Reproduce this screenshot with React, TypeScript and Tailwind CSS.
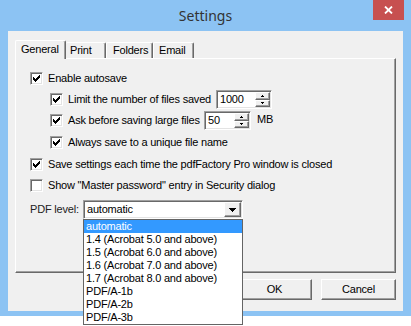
import React from "react"

function Check() {
  return (
    <svg width="7" height="7" viewBox="0 0 7 7" shapeRendering="crispEdges" className="block">
      <path
        d="M6 0h1v1H6z M5 1h2v1H5z M0 2h1v1H0z M4 2h3v1H4z M0 3h2v1H0z M3 3h3v1H3z M0 4h5v1H0z M1 5h3v1H1z M2 6h1v1H2z"
        fill="#000"
      />
    </svg>
  )
}

function CheckBox({ checked }: { checked: boolean }) {
  return (
    <div className="w-[13px] h-[13px] shrink-0 bg-white border border-t-[#a0a0a0] border-l-[#a0a0a0] border-r-white border-b-white shadow-[inset_1px_1px_0_#696969,inset_-1px_-1px_0_#e3e3e3] flex items-center justify-center">
      {checked && <Check />}
    </div>
  )
}

function SpinButton({ up }: { up: boolean }) {
  return (
    <div className="flex-1 bg-[#f0f0f0] border border-t-white border-l-white border-r-[#696969] border-b-[#696969] shadow-[inset_-1px_-1px_0_#a0a0a0] flex items-center justify-center">
      <svg width="3" height="2" viewBox="0 0 3 2" shapeRendering="crispEdges" className="block">
        <path d={up ? "M1 0h1v1H1z M0 1h3v1H0z" : "M0 0h3v1H0z M1 1h1v1H1z"} fill="#000" />
      </svg>
    </div>
  )
}

function Spin({ value, className }: { value: string; className: string }) {
  return (
    <div
      className={`h-[19px] flex bg-white border border-t-[#a0a0a0] border-l-[#a0a0a0] border-r-white border-b-white shadow-[inset_1px_1px_0_#696969,inset_-1px_-1px_0_#e3e3e3] p-[1px] ${className}`}
    >
      <span className="flex-1 pl-[2px] leading-[15px]">{value}</span>
      <div className="w-[15px] flex flex-col">
        <SpinButton up />
        <SpinButton up={false} />
      </div>
    </div>
  )
}

function CheckRow({
  checked,
  label,
  className,
}: {
  checked: boolean
  label: string
  className: string
}) {
  return (
    <div className={`flex items-center ${className}`}>
      <CheckBox checked={checked} />
      <span className="ml-[5px] whitespace-nowrap">{label}</span>
    </div>
  )
}

const levels = [
  "automatic",
  "1.4 (Acrobat 5.0 and above)",
  "1.5 (Acrobat 6.0 and above)",
  "1.6 (Acrobat 7.0 and above)",
  "1.7 (Acrobat 8.0 and above)",
  "PDF/A-1b",
  "PDF/A-2b",
  "PDF/A-3b",
]

export default function App() {
  return (
    <div className="relative w-[411px] h-[326px] bg-white overflow-hidden font-['Liberation_Sans',Arial,sans-serif] text-[11px] tracking-[-0.2px] text-black">
      <div className="h-[316px] bg-[#8cc3f3] flex flex-col pb-[5px]">
        {/* title bar */}
        <div className="relative h-[31px] flex items-center justify-center">
          <span className="font-['Segoe_UI','Noto_Sans',sans-serif] text-[14px] tracking-normal text-[#333333] -mt-[1px]">
            Settings
          </span>
          <div className="absolute top-0 right-[7px] w-[31px] h-[20px] bg-[#c75050] flex items-center justify-center">
            <svg width="9" height="8" viewBox="0 0 9 8" className="block">
              <path d="M1 0.5 L8 7.5 M8 0.5 L1 7.5" stroke="#fff" strokeWidth="1.8" />
            </svg>
          </div>
        </div>

        {/* client */}
        <div className="flex-1 mx-[8px] bg-[#f0f0f0] flex flex-col px-[7px] pt-[9px]">
          {/* tabs */}
          <div className="relative z-10 flex items-end h-[18px]">
            <div className="h-[19px] -mb-[1px] w-[51px] bg-[#f0f0f0] border-t border-l border-r border-t-white border-l-white border-r-[#696969] shadow-[inset_-1px_0_0_#a0a0a0] rounded-t-[2px] pl-[5px] pt-[1px] leading-[14px]">
              General
            </div>
            <div className="h-[16px] w-[40px] border-t border-r border-t-white border-r-[#696969] shadow-[inset_-1px_0_0_#a0a0a0] rounded-t-[2px] pl-[4px] leading-[15px]">
              Print
            </div>
            <div className="h-[16px] w-[47px] border-t border-l border-r border-t-white border-l-white border-r-[#696969] shadow-[inset_-1px_0_0_#a0a0a0] rounded-t-[2px] pl-[6px] leading-[15px]">
              Folders
            </div>
            <div className="h-[16px] w-[41px] border-t border-l border-r border-t-white border-l-white border-r-[#696969] shadow-[inset_-1px_0_0_#a0a0a0] rounded-t-[2px] pl-[5px] leading-[15px]">
              Email
            </div>
          </div>

          {/* panel */}
          <div className="h-[215px] flex flex-col border border-t-white border-l-white border-r-[#696969] border-b-[#696969] shadow-[inset_-1px_-1px_0_#a0a0a0] pt-[9px] pl-[14px]">
            <CheckRow checked label="Enable autosave" className="h-[21px]" />
            <div className="flex items-center h-[21px] pl-[20px]">
              <CheckBox checked />
              <span className="ml-[5px] w-[148px] whitespace-nowrap">Limit the number of files saved</span>
              <Spin value="1000" className="w-[56px]" />
            </div>
            <div className="flex items-center h-[21px] pl-[20px]">
              <CheckBox checked />
              <span className="ml-[5px] w-[136px] whitespace-nowrap">Ask before saving large files</span>
              <Spin value="50" className="w-[47px]" />
              <span className="ml-[6px] -mt-[3px]">MB</span>
            </div>
            <CheckRow checked label="Always save to a unique file name" className="h-[21px] mt-[1px] pl-[20px]" />
            <CheckRow
              checked
              label="Save settings each time the pdfFactory Pro window is closed"
              className="h-[21px] mt-[1px]"
            />
            <CheckRow
              checked={false}
              label={'Show "Master password" entry in Security dialog'}
              className="h-[20px]"
            />
            <div className="flex items-center h-[19px] mt-[5px]">
              <span className="w-[53px] text-[#222]">PDF level:</span>
              <div className="w-[160px] h-[19px] flex bg-white border border-t-[#a0a0a0] border-l-[#a0a0a0] border-r-white border-b-white shadow-[inset_1px_1px_0_#696969,inset_-1px_-1px_0_#e3e3e3] p-[1px]">
                <span className="flex-1 pl-[2px] leading-[15px]">automatic</span>
                <div className="w-[17px] bg-[#f0f0f0] border border-t-white border-l-white border-r-[#696969] border-b-[#696969] shadow-[inset_-1px_-1px_0_#a0a0a0] flex items-center justify-center">
                  <svg width="7" height="4" viewBox="0 0 7 4" shapeRendering="crispEdges" className="block">
                    <path d="M0 0h7v1H0z M1 1h5v1H1z M2 2h3v1H2z M3 3h1v1H3z" fill="#000" />
                  </svg>
                </div>
              </div>
            </div>
          </div>

          {/* dialog buttons */}
          <div className="flex justify-end gap-[9px] mt-[6px]">
            <div className="w-[75px] h-[21px] bg-[#f0f0f0] border border-t-white border-l-white border-r-[#696969] border-b-[#696969] shadow-[inset_-1px_-1px_0_#a0a0a0] flex items-center justify-center">
              OK
            </div>
            <div className="w-[75px] h-[21px] bg-[#f0f0f0] border border-t-white border-l-white border-r-[#696969] border-b-[#696969] shadow-[inset_-1px_-1px_0_#a0a0a0] flex items-center justify-center">
              Cancel
            </div>
          </div>
        </div>
      </div>

      {/* open combo list */}
      <div className="absolute left-[83px] top-[219px] w-[160px] z-20 bg-white border border-[#646464]">
        {levels.map((l, i) => (
          <div
            key={l}
            className={`h-[13px] leading-[13px] pl-[2px] whitespace-nowrap ${i === 0 ? "bg-[#3399ff] text-white" : ""}`}
          >
            {l}
          </div>
        ))}
      </div>
    </div>
  )
}
